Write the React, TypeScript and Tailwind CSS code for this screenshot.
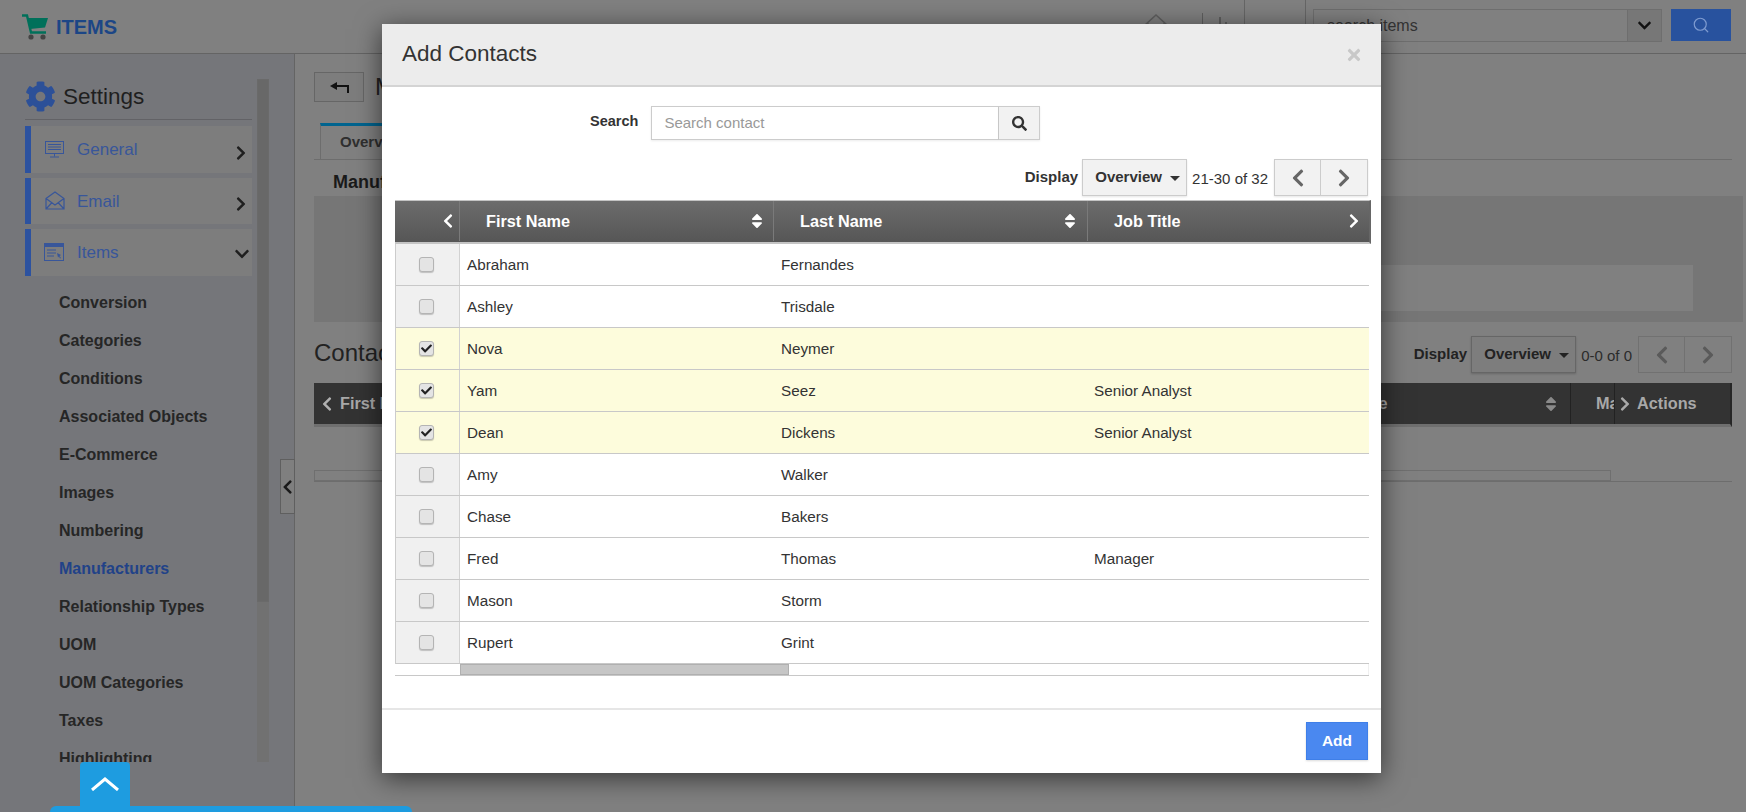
import React from 'react'
import { Search } from 'lucide-react'
import { FaCheck, FaChevronDown, FaChevronLeft, FaChevronRight, FaCog, FaSearch, FaSort, FaTimes } from 'react-icons/fa'

const contacts = [
    { first: 'Abraham', last: 'Fernandes', job: '', checked: false },
    { first: 'Ashley', last: 'Trisdale', job: '', checked: false },
    { first: 'Nova', last: 'Neymer', job: '', checked: true },
    { first: 'Yam', last: 'Seez', job: 'Senior Analyst', checked: true },
    { first: 'Dean', last: 'Dickens', job: 'Senior Analyst', checked: true },
    { first: 'Amy', last: 'Walker', job: '', checked: false },
    { first: 'Chase', last: 'Bakers', job: '', checked: false },
    { first: 'Fred', last: 'Thomas', job: 'Manager', checked: false },
    { first: 'Mason', last: 'Storm', job: '', checked: false },
    { first: 'Rupert', last: 'Grint', job: '', checked: false },
]

const subItems = ['Conversion', 'Categories', 'Conditions', 'Associated Objects', 'E-Commerce', 'Images', 'Numbering', 'Manufacturers', 'Relationship Types', 'UOM', 'UOM Categories', 'Taxes', 'Highlighting']

const CartIcon = () => (
    <svg width="26" height="26" viewBox="0 0 26 26">
        <path d="M0 1.5h5L9 18.5h15" fill="none" stroke="#00705a" strokeWidth="2.4" />
        <path d="M6 4h20l-3 9.5-15 1.5z" fill="#00705a" />
        <circle cx="9" cy="23" r="2.6" fill="#444" />
        <circle cx="21" cy="23" r="2.6" fill="#444" />
    </svg>
)

const MonitorIcon = () => (
    <svg width="20" height="18" viewBox="0 0 20 18" fill="none" stroke="#38569a" strokeWidth="1">
        <rect x="0.5" y="0.5" width="18" height="12" />
        <path d="M3 3.5h13M3 6h13M3 8.5h13M9.5 12.5v3M5 16h9" />
    </svg>
)

const MailIcon = () => (
    <svg width="20" height="20" viewBox="0 0 20 20" fill="none" stroke="#38569a" strokeWidth="1.2">
        <path d="M1 7.5 10 1l9 6.5V18H1zM1 7.5l9 6.5 9-6.5M1 18l6-6.5M19 18l-6-6.5" />
    </svg>
)

const WindowIcon = () => (
    <svg width="20" height="19" viewBox="0 0 20 19" fill="none" stroke="#38569a" strokeWidth="1">
        <rect x="0.5" y="0.5" width="19" height="17" />
        <path d="M1 2.5h18" strokeWidth="3" />
        <path d="M3 7h9M3 10h9M3 13h7" />
        <path d="M13 10l4 2-1.5 1 1.5 2-1 .5-1-2-1 1z" fill="#38569a" stroke="none" />
    </svg>
)

const BackIcon = () => (
    <svg width="19" height="11" viewBox="0 0 19 11" fill="#111">
        <path d="M0 4 7 0v3h12v8h-2V5H7v3z" />
    </svg>
)

const Pager = ({ dim }: { dim?: boolean }) => (
    <div className={`flex h-[37px] w-[94px] border ${dim ? 'border-[#717171] text-[#5a5a5a]' : 'border-[#ccc] bg-[#f2f2f2] text-[#666] shadow-[0_1px_2px_rgba(0,0,0,0.1)]'}`}>
        <div className={`flex w-[46px] items-center justify-center border-r ${dim ? 'border-[#717171]' : 'border-[#ccc]'}`}><FaChevronLeft className="text-[20px]" /></div>
        <div className="flex flex-1 items-center justify-center"><FaChevronRight className="text-[20px]" /></div>
    </div>
)

const DisplayControl = ({ label, dim }: { label: string; dim?: boolean }) => (
    <div className="flex items-start">
        <span className={`mt-[7px] mr-[4px] text-[15px] font-bold ${dim ? 'text-[#222]' : 'text-[#333]'}`}>Display</span>
        <div className={`flex h-[37px] w-[105px] items-center justify-center border pb-[1px] pl-[6px] text-[15px] font-bold ${dim ? 'border-[#666] bg-[#7d7d7d] text-[#222] shadow-[0_1px_2px_rgba(0,0,0,0.2)]' : 'border-[#ccc] bg-[#f2f2f2] text-[#333] shadow-[0_1px_2px_rgba(0,0,0,0.1)]'}`}>
            Overview
            <span className={`ml-[8px] mt-[2px] border-x-[5px] border-t-[5px] border-x-transparent ${dim ? 'border-t-[#222]' : 'border-t-[#333]'}`} />
        </div>
        <span className={`mt-[9px] ml-[5px] mr-[6px] text-[15px] ${dim ? 'text-[#2b2b2b]' : 'text-[#333]'}`}>{label}</span>
        <Pager dim={dim} />
    </div>
)

const Sidebar = () => (
    <aside className="relative flex h-full w-[295px] shrink-0 border-r border-[#646464] bg-[#75767a]">
        <div className="ml-[25px] h-[708px] w-[227px] overflow-hidden">
            <div className="flex h-[66px] items-center border-b border-[#626266] pt-[20px]">
                <FaCog className="text-[31px] text-[#2c5098]" />
                <span className="ml-[7px] text-[22.5px] text-[#1f1f1f]">Settings</span>
            </div>
            <div className="mt-[6px] flex h-[47px] items-center border-l-[6px] border-[#2c52a0] bg-[#7d7d7d] pl-[14px]">
                <MonitorIcon />
                <span className="ml-[12px] mt-[1px] text-[17px] text-[#38569a]">General</span>
                <FaChevronRight className="ml-auto mt-[6px] mr-[3px] text-[16px] text-[#1f1f1f]" />
            </div>
            <div className="mt-[5px] flex h-[46px] items-center border-l-[6px] border-[#2c52a0] bg-[#7d7d7d] pl-[14px]">
                <MailIcon />
                <span className="ml-[12px] mt-[1px] text-[17px] text-[#38569a]">Email</span>
                <FaChevronRight className="ml-auto mt-[6px] mr-[3px] text-[16px] text-[#1f1f1f]" />
            </div>
            <div className="mt-[5px] flex h-[47px] items-center border-l-[6px] border-[#2c52a0] bg-[#7d7d7d] pl-[13px]">
                <WindowIcon />
                <span className="ml-[13px] text-[17px] text-[#38569a]">Items</span>
                <FaChevronDown className="ml-auto mt-[2px] mr-[2px] text-[16px] text-[#1f1f1f]" />
            </div>
            <ul className="ml-[34px] mt-[8px]">
                {subItems.map((item) => (
                    <li key={item} className={`flex h-[38px] items-center whitespace-nowrap text-[16px] font-bold ${item === 'Manufacturers' ? 'text-[#214288]' : 'text-[#262626]'}`}>{item}</li>
                ))}
            </ul>
        </div>
        <div className="ml-[5px] mt-[25px] h-[683px] w-[12px] bg-[#717171]">
            <div className="h-[523px] border border-[#6a6a6a] bg-[#686868]" />
        </div>
        <div className="absolute left-[280px] top-[405px] flex h-[55px] w-[15px] items-center justify-center border border-[#5f5f5f] bg-[#7f7f7f]">
            <FaChevronLeft className="text-[16px] text-[#1a1a1a]" />
        </div>
    </aside>
)

const ContactsPanel = () => (
    <section className="min-w-0 flex-1 pl-[19px] pr-[14px]">
        <div className="mt-[18px] flex h-[30px] items-center">
            <button className="flex h-[30px] w-[50px] items-center justify-center border border-[#666] bg-[#7d7d7d]"><BackIcon /></button>
            <h1 className="ml-[11px] text-[24px] leading-none text-[#222]">Manufacturers</h1>
        </div>
        <div className="mt-[21px] flex h-[37px] border-b border-[#6d6d6d]">
            <div className="ml-[6px] flex w-[200px] items-center border-l border-t-[3px] border-[#6d6d6d] border-t-[#00648f] bg-[#808080] pl-[19px] text-[15px] font-bold text-[#2f2f2f]">Overview</div>
        </div>
        <h2 className="ml-[19px] mt-[12px] h-[24px] text-[18px] font-bold leading-[20px] text-[#1a1a1a]">Manufacturer</h2>
        <div className="-mr-[11px] flex h-[126px] items-end bg-[#767676] pb-[11px]">
            <div className="ml-auto mr-[50px] h-[46px] w-[800px] bg-[#808080]" />
        </div>
        <div className="mt-[14px] flex items-start justify-between">
            <h2 className="-mt-[1px] text-[24px] text-[#222]">Contacts</h2>
            <DisplayControl label="0-0 of 0" dim />
        </div>
        <div className="mt-[10px] flex h-[44px] items-center border-b-[3px] border-r-[2px] border-[#6f6f6f] border-r-[#262626] bg-[#333] text-[16.25px] font-bold text-[#a8a8a8]">
            <FaChevronLeft className="ml-[5px] shrink-0 text-[16px] text-[#b0b0b0]" />
            <span className="ml-[5px] w-[981px] shrink-0">First Name</span>
            <span className="w-[66px] shrink-0 whitespace-nowrap">Job Title</span>
            <FaSort className="ml-[155px] shrink-0 text-[18px] text-[#8a8a8a]" />
            <div className="ml-[10px] flex h-full w-[44px] shrink-0 items-center overflow-hidden whitespace-nowrap border-l border-[#222] pl-[25px]">Manufacturer</div>
            <div className="flex h-full flex-1 items-center border-l border-[#222] pl-[2px]">
                <FaChevronRight className="shrink-0 text-[16px] text-[#a8a8a8]" />
                <span className="ml-[4px]">Actions</span>
            </div>
        </div>
        <div className="mt-[43px] h-[11px] w-[1297px] border border-[#6f6f6f]" />
        <div className="border-b border-[#6d6d6d]" />
    </section>
)

const AddContactsModal = () => (
    <div className="absolute left-[382px] top-[24px] flex h-[749px] w-[999px] flex-col bg-white shadow-[0_5px_25px_rgba(0,0,0,0.6)]">
        <div className="flex h-[63px] shrink-0 items-center justify-between border-b-2 border-[#d4d4d4] bg-[#ececec] pl-[20px] pr-[18px]">
            <h3 className="text-[22.5px] leading-none text-[#333]">Add Contacts</h3>
            <FaTimes className="text-[18px] text-[#c8c8c8]" />
        </div>
        <div className="mt-[19px] flex h-[34px] items-start pl-[208px]">
            <span className="mt-[5px] text-[14.5px] font-bold text-[#333]">Search</span>
            <input placeholder="Search contact" className="ml-[13px] h-[34px] w-[348px] border border-[#ccc] pb-[2px] pl-[12px] text-[15px] outline-none shadow-[0_1px_2px_rgba(0,0,0,0.08)] placeholder:text-[#999]" />
            <div className="flex h-[34px] w-[41px] items-center justify-center border border-l-0 border-[#ccc] bg-[#f2f2f2] shadow-[0_1px_2px_rgba(0,0,0,0.08)]">
                <FaSearch className="text-[15px] text-[#333]" />
            </div>
        </div>
        <div className="mt-[19px] flex justify-end pr-[13px]">
            <DisplayControl label="21-30 of 32" />
        </div>
        <div className="ml-[13px] mt-[4px] w-[976px]">
            <div className="flex h-[44px] items-center border-b-2 border-r-[2px] border-t border-[#c4c4c4] border-r-[#666] bg-gradient-to-b from-[#6c6c6c] to-[#565656] pb-[1px] text-[16.25px] font-bold text-white">
                <div className="flex h-full w-[65px] items-center justify-end border-r border-[#7a7a7a] pr-[3px]"><FaChevronLeft className="text-[16px]" /></div>
                <div className="flex h-full w-[314px] items-center border-r border-[#7a7a7a] pl-[26px] pr-[7px]">
                    First Name
                    <FaSort className="ml-auto text-[18px]" />
                </div>
                <div className="flex h-full w-[314px] items-center border-r border-[#7a7a7a] pl-[26px] pr-[8px]">
                    Last Name
                    <FaSort className="ml-auto text-[18px]" />
                </div>
                <div className="flex h-full flex-1 items-center pl-[26px] pr-[7px]">
                    Job Title
                    <FaChevronRight className="ml-auto text-[16px]" />
                </div>
            </div>
            <div className="w-[974px] border-l border-[#ccc]">
                {contacts.map((c) => (
                    <div key={c.first} className={`flex h-[42px] border-b border-[#c8c8c8] text-[15.25px] text-[#333] ${c.checked ? 'bg-[#fdfcdc]' : 'bg-white'}`}>
                        <div className={`flex w-[64px] shrink-0 items-center justify-center border-r border-[#d2d2d2] pr-[2px] ${c.checked ? '' : 'bg-[#f0f0f0]'}`}>
                            <div className="flex h-[15px] w-[15px] items-center justify-center rounded-[3px] border border-[#b4b4b4] bg-[#e4e4e4] shadow-[0_1px_1px_rgba(0,0,0,0.2)]">
                                {c.checked && <FaCheck className="text-[11px] text-[#222]" />}
                            </div>
                        </div>
                        <div className="flex w-[314px] items-center pl-[7px] pt-[1px]">{c.first}</div>
                        <div className="flex w-[314px] items-center pl-[7px] pt-[1px]">{c.last}</div>
                        <div className="flex flex-1 items-center pl-[6px] pt-[1px]">{c.job}</div>
                    </div>
                ))}
            </div>
            <div className="w-[974px] border-b border-[#c8c8c8] pl-[65px]">
                <div className="h-[11px] border-r border-[#f0f0f0]">
                    <div className="h-full w-[329px] border border-[#b0b0b0] bg-[#c6c6c6]" />
                </div>
            </div>
        </div>
        <div className="mt-auto flex h-[65px] items-start justify-end border-t-2 border-[#e6e6e6] pr-[13px] pt-[12px]">
            <button className="h-[38px] w-[62px] border border-[#3f7fe8] bg-[#4a88f0] text-[15.5px] font-bold text-white shadow-[0_1px_2px_rgba(0,0,0,0.15)]">Add</button>
        </div>
    </div>
)

const App = () => {
    return (
        <div className="relative h-[812px] w-[1746px] overflow-hidden bg-[#808080] font-['Liberation_Sans',Arial,sans-serif]">
            <header className="flex h-[54px] items-center border-b border-[#646464] pl-[22px] pr-[15px]">
                <CartIcon />
                <span className="ml-[8px] text-[20px] font-bold text-[#1c4686]">ITEMS</span>
                <div className="ml-auto flex h-full items-start">
                    <svg width="24" height="20" viewBox="0 0 24 20" fill="none" stroke="#5f5f5f" strokeWidth="1.5" className="mr-[34px] mt-[13px]"><path d="M1 12 12 2l11 10M4 10v9h16v-9" /></svg>
                    <svg width="42" height="24" viewBox="0 0 42 24" fill="#5f5f5f" className="mt-[13px]"><path d="M0 0h1v24H0zM12 12h2v12h-2zM17 4h2v20h-2zM23 9h2v15h-2z" /></svg>
                    <div className="h-full w-[62px] border-x border-[#666]" />
                    <div className="ml-[7px] mt-[9px] flex h-[33px] w-[349px] border border-[#6e6e6e]">
                        <span className="flex flex-1 items-center pl-[13px] text-[16px] text-[#333]">search items</span>
                        <div className="flex w-[34px] items-center justify-center border-l border-[#6e6e6e] bg-[#777]"><FaChevronDown className="text-[15px] text-[#111]" /></div>
                    </div>
                    <div className="ml-[9px] mt-[9px] flex h-[32px] w-[60px] items-center justify-center bg-[#28529e]"><Search size={18} strokeWidth={1.6} className="text-[#7e9bd0]" /></div>
                </div>
            </header>
            <div className="flex h-[758px]">
                <Sidebar />
                <ContactsPanel />
            </div>
            <div className="absolute left-[80px] top-[762px] flex h-[44px] w-[50px] items-center justify-center rounded-t-[4px] bg-[#1e9ce0]">
                <svg width="28" height="14" viewBox="0 0 28 14" fill="none" stroke="white" strokeWidth="3"><path d="M1 13 14 2l13 11" /></svg>
            </div>
            <div className="absolute left-[50px] top-[806px] h-[6px] w-[362px] rounded-t-[6px] bg-[#1e9ce0]" />
            <AddContactsModal />
        </div>
    )
}

export default App
